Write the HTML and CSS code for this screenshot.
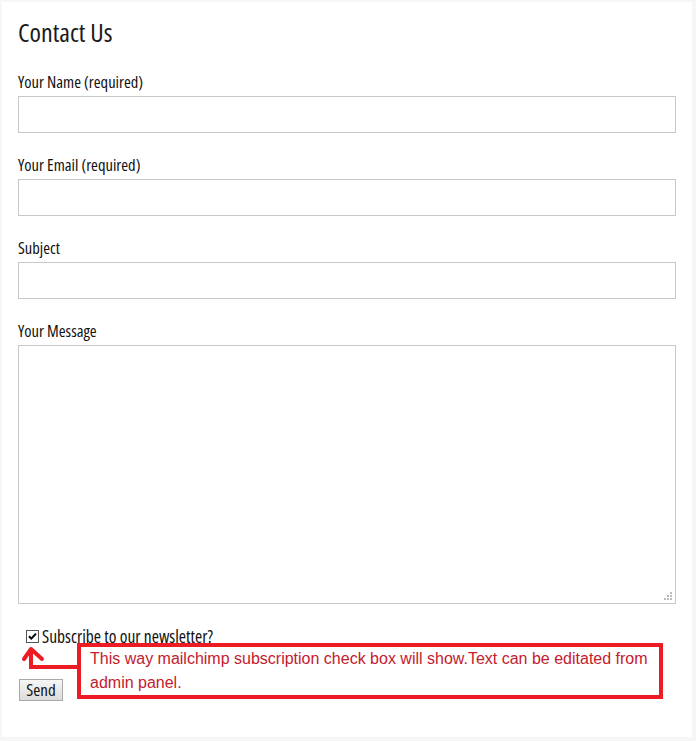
FILE: index.html
```html
<!DOCTYPE html>
<html lang="en">
<head>
  <meta charset="UTF-8" />
  <title>Contact Us</title>
  <link rel="stylesheet" href="styles.css">
</head>
<body>
  <div class="panel">
    <h1>Contact Us</h1>

    <form class="contact_form" onsubmit="return false">
      <label class="field">
        <span class="field_label">Your Name (required)</span>
        <input type="text" />
      </label>
      <label class="field">
        <span class="field_label">Your Email (required)</span>
        <input type="email" />
      </label>
      <label class="field">
        <span class="field_label">Subject</span>
        <input type="text" />
      </label>
      <label class="field">
        <span class="field_label">Your Message</span>
        <textarea></textarea>
      </label>

      <div class="subscribe">
        <span class="tick">
          <svg width="13" height="13" viewBox="0 0 13 13">
            <rect x="0.5" y="0.5" width="12" height="12" fill="#fff" stroke="#555" />
            <path d="M3 6.2 L5.3 8.6 L10 3.6" fill="none" stroke="#000" stroke-width="2" />
          </svg>
        </span>
        <span>Subscribe to our newsletter?</span>
      </div>

      <button type="submit" class="send">Send</button>
    </form>

    <!-- anotação por cima do formulário -->
    <div class="note">This way mailchimp subscription check box will show.Text can be editated from admin panel.</div>
    <svg class="note_arrow" width="64" height="28" viewBox="0 0 64 28">
      <path d="M60 22 H11 V6" fill="none" stroke="#ed1c24" stroke-width="4" />
      <path d="M4 14 L11 4 L22 14" fill="none" stroke="#ed1c24" stroke-width="4" stroke-linecap="round" stroke-linejoin="round" />
    </svg>
  </div>
</body>
</html>
```

FILE: styles.css
```css
body {
  margin: 0;
  background: #f6f6f6;
  font-family: "Open Sans", "Liberation Sans", sans-serif;
  font-stretch: 75%;
  color: #111;
}

.panel {
  position: relative;
  background: #fff;
  margin: 2px 4px 0 2px;
  padding: 16px 16px 36px;
  min-height: 683px;
}

h1 {
  margin: 0 0 24px;
  font-size: 26px;
  line-height: 29px;
  font-weight: normal;
  color: #1a1a1a;
}

.contact_form {
  display: flex;
  flex-direction: column;
  align-items: flex-start;
}

.field {
  display: flex;
  flex-direction: column;
  width: 100%;
  margin-bottom: 21px;
}

.field_label {
  font-size: 16.5px;
  line-height: 20px;
  margin-bottom: 4px;
  margin-top: 1px;
}

.field input,
.field textarea {
  box-sizing: border-box;
  width: 100%;
  border: 1px solid #c8c8c8;
  background: #fff;
  font: inherit;
  margin: 0;
}

.field input {
  height: 37px;
}

.field textarea {
  height: 259px;
  resize: none;
  background:
    linear-gradient(#bbb, #bbb) right 3px bottom 3px / 2px 2px no-repeat,
    linear-gradient(#bbb, #bbb) right 6px bottom 3px / 2px 2px no-repeat,
    linear-gradient(#bbb, #bbb) right 9px bottom 3px / 2px 2px no-repeat,
    linear-gradient(#bbb, #bbb) right 3px bottom 6px / 2px 2px no-repeat,
    linear-gradient(#bbb, #bbb) right 6px bottom 6px / 2px 2px no-repeat,
    linear-gradient(#bbb, #bbb) right 3px bottom 9px / 2px 2px no-repeat,
    #fff;
}

.field:last-of-type {
  margin-bottom: 22px;
}

.subscribe {
  display: flex;
  align-items: center;
  font-size: 17.5px;
  line-height: 20px;
  padding-left: 8px;
  margin-bottom: 33px;
}

.tick {
  display: flex;
  margin-right: 3px;
}

.send {
  margin-left: 1px;
  width: 44px;
  height: 22px;
  padding: 0;
  font-family: inherit;
  font-stretch: 75%;
  font-size: 17px;
  line-height: 20px;
  color: #111;
  border: 1px solid #a9a9a9;
  background: linear-gradient(#f6f6f6, #dcdcdc);
  cursor: pointer;
}

.note {
  position: absolute;
  left: 75px;
  top: 641px;
  height: 48px;
  border: 4px solid #ed1c24;
  padding: 0 0 0 9px;
  width: 569px;
  font-family: "Liberation Sans", Arial, sans-serif;
  font-stretch: normal;
  font-size: 16px;
  line-height: 24px;
  color: #c4202e;
}

.note_arrow {
  position: absolute;
  left: 18px;
  top: 643px;
}
```
